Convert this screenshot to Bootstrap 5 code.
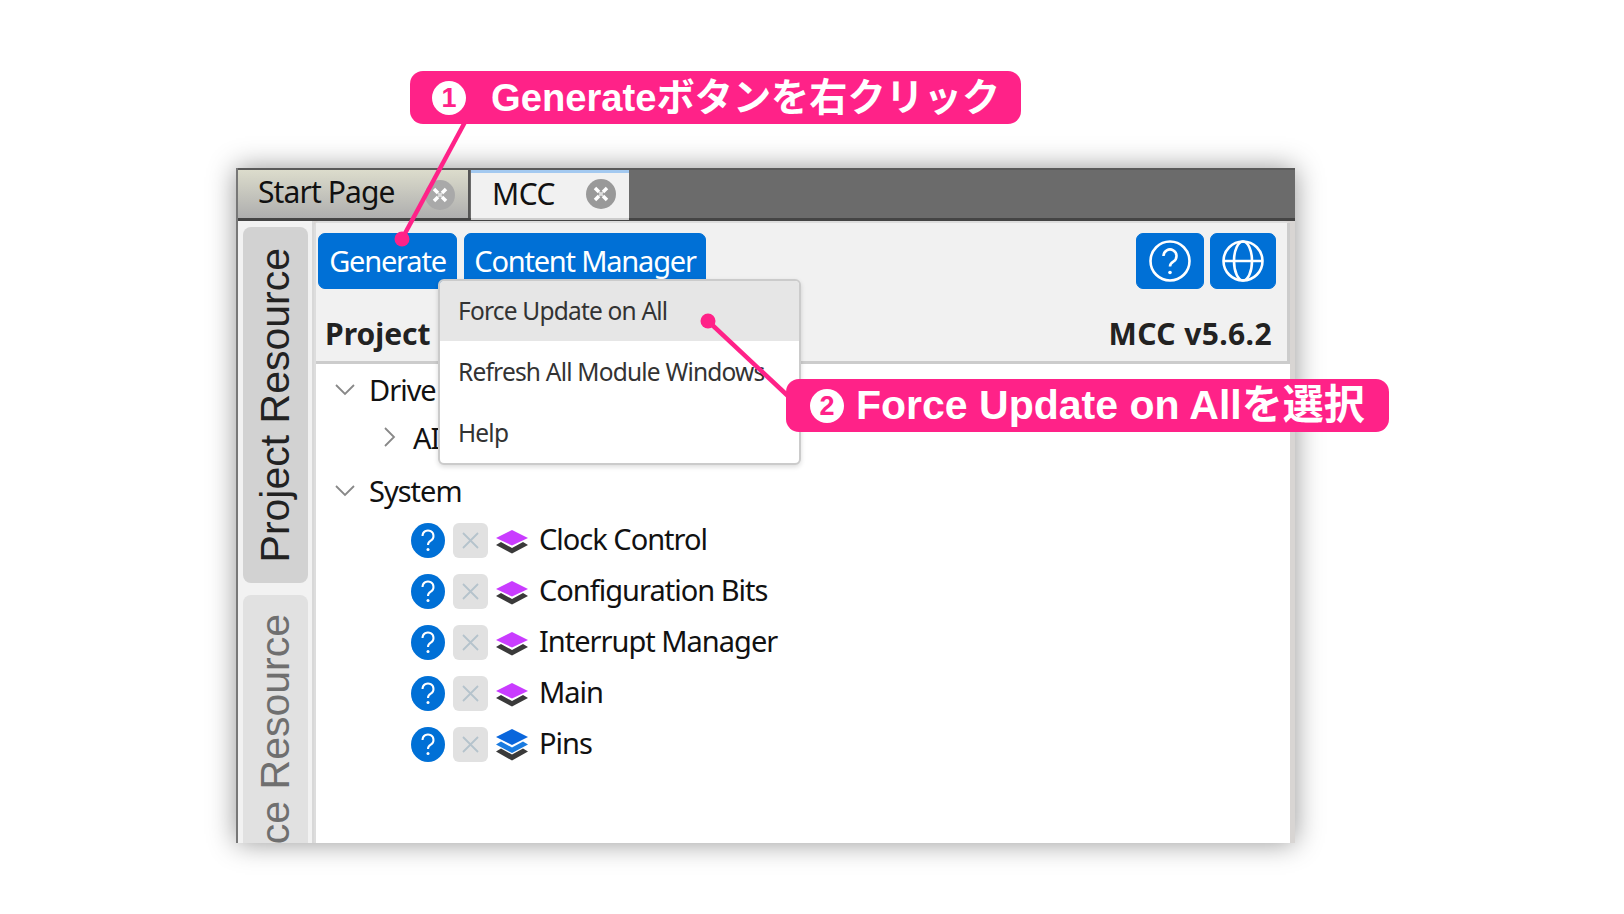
<!DOCTYPE html>
<html lang="ja">
<head>
<meta charset="utf-8">
<title>MCC</title>
<link href="https://cdn.jsdelivr.net/npm/bootstrap@5.3.0/dist/css/bootstrap.min.css" rel="stylesheet">
<style>
html,body{margin:0;height:914px;overflow:hidden;background:#fff}
.stage{position:relative;width:1624px;height:914px;padding:168px 329px 72px 236px;font-family:"Noto Sans","Noto Sans CJK JP",sans-serif;overflow:hidden}
.win{width:1059px;height:675px;background:#d8d5d3;box-shadow:0 0 26px rgba(0,0,0,.42);border-left:2px solid #777;overflow:hidden}
.tabbar{height:53px;background:#6b6b6b;border-top:2px solid #5a5a5a;border-bottom:3px solid #444}
.mtab{height:48px;color:#111;font-size:30px;letter-spacing:-.9px;line-height:44px;padding-left:20px;position:relative}
.tab-a{width:232px;background:linear-gradient(#dcdccc,#aeaeae);border-right:2px solid #555}
.tab-b{width:158px;background:#f1f1f1;border-top:3px solid #a3c9f0;padding-left:21px;height:50px;margin-left:1px;border-bottom:2px solid #ccc;line-height:41px;letter-spacing:-.5px}
.closer{position:absolute;width:30px;height:30px}
.tab-a .closer{right:13px;top:10px}
.tab-a .closer circle{fill:#a9a9a9}
.tab-b .closer{right:13px;top:6px}
.side{width:76px;background:#f2f2f2;padding:6px 5px 0 5px;border-right:2px solid #d8d8d8}
.vtab{width:65px;font-family:"Liberation Sans",Arial,sans-serif;font-size:41px;display:flex;justify-content:center;white-space:nowrap;overflow:hidden}
.vtab span{writing-mode:vertical-rl;transform:rotate(180deg);line-height:65px;flex:none}
.vt1{height:356px;background:#d2d2d2;color:#222;border-radius:8px;margin-bottom:12px;align-items:center}
.vt2{height:250px;background:#e1e1e1;color:#6f6f6f;border-radius:8px 8px 0 0;align-items:flex-start}
.vt2 span{margin-top:19px}
.panel{width:976px;background:#fff;position:relative;border-top:2px solid #ddd;border-left:2px solid #ddd;border-radius:6px 6px 0 0}
.phead{height:141px;background:#f1f1f1;border-bottom:3px solid #ccc;border-right:3px solid #ccc;padding:10px 11px 0 2px;position:relative}
.topbtns{gap:7px}
.bluebtn{--bs-btn-bg:#0070d6;--bs-btn-color:#fff;--bs-btn-border-color:#0070d6;--bs-btn-hover-bg:#0070d6;--bs-btn-hover-color:#fff;--bs-btn-border-radius:7px;--bs-btn-font-size:29px;--bs-btn-padding-x:0;--bs-btn-padding-y:0;height:56px;line-height:50px;font-weight:400;letter-spacing:-1.2px}
.bw1{width:139px}.bw2{width:242px}.bw3{width:68px}.bw4{width:66px;margin-left:-1px}
.bluebtn svg{display:block;margin:auto}
.ptitle{font-size:30px;font-weight:700;color:#222;line-height:38px;margin-top:26px;padding:0 4px 0 7px}
.ver{letter-spacing:.4px}
.popup{position:absolute;left:122px;top:56px;width:363px;height:186px;display:block;padding:0;margin:0;border:2px solid #cbcbcb;border-radius:6px;box-shadow:0 2px 5px rgba(0,0,0,.14);overflow:hidden;--bs-dropdown-font-size:24.5px;font-size:24.5px;letter-spacing:-.8px;min-width:0;z-index:3}
.popup .dropdown-item{color:#333;padding:0 0 0 18px;line-height:61px;height:61px}
.popup .dropdown-item.on{background:#e6e6e6;height:60px;line-height:60px}
.tree{padding-top:3px;color:#111;font-size:29px;letter-spacing:-1px}
.trow{height:44px;align-items:center;display:flex;line-height:1;gap:14px}
.lv0{padding-left:19px}
.lv1{padding-left:63px;margin-top:4px}
.sysrow{margin-top:9px}
.mods{margin-top:3px}
.chev{width:20px;height:20px;flex:none}
.mod{height:51px;padding-left:95px;display:flex;align-items:center;gap:8px}
.qdot{width:34px;height:35px;flex:none}
.xbox{width:35px;height:35px;background:#e1e1e1;border-radius:6px;flex:none;display:flex;align-items:center;justify-content:center}
.lay{width:32px;height:32px;flex:none}
.modname{margin-left:3px;position:relative;top:-2px}
.tag{position:absolute;background:#ff2288;color:#fff;font-family:"Liberation Sans","Noto Sans CJK JP",sans-serif;font-weight:700;border-radius:13px;height:53px;display:flex;align-items:center;white-space:nowrap;z-index:6}
.tag1{left:410px;top:71px;width:611px;padding-left:22px;font-size:38.200px}
.tag2{left:786px;top:379px;width:603px;padding-left:24px;font-size:41px}
.num{display:block;flex:none;width:34px;height:34px;border-radius:50%;background:#fff;color:#ff2288;font-size:27px;line-height:34px;text-align:center}
.t1gap{margin-left:25px}
.t2gap{margin-left:12px}
.lead-lines{position:absolute;left:0;top:0;width:1624px;height:914px;z-index:5;pointer-events:none}
</style>
</head>
<body>
<div class="stage">
  <div class="win d-flex flex-column">
    <div class="tabbar d-flex flex-shrink-0">
      <div class="mtab tab-a">Start Page
        <svg class="closer" viewBox="0 0 30 30"><circle cx="15" cy="15" r="15"/><path d="M9 9l4 4M21 9l-4 4M9 21l4-4M21 21l-4-4" stroke="#fff" stroke-width="3.500"/><path d="M13 13l4 4M17 13l-4 4" stroke="#ddd" stroke-width="2"/></svg>
      </div>
      <div class="mtab tab-b">MCC
        <svg class="closer" viewBox="0 0 30 30"><circle cx="15" cy="15" r="15" fill="#999"/><path d="M9 9l4 4M21 9l-4 4M9 21l4-4M21 21l-4-4" stroke="#fff" stroke-width="3.500"/><path d="M13 13l4 4M17 13l-4 4" stroke="#ddd" stroke-width="2"/></svg>
      </div>
    </div>
    <div class="d-flex flex-grow-1">
      <div class="side flex-shrink-0">
        <div class="vtab vt1"><span>Project Resource</span></div>
        <div class="vtab vt2"><span>Device Resource</span></div>
      </div>
      <div class="panel flex-shrink-0">
        <div class="phead">
          <div class="d-flex topbtns">
            <button class="btn bluebtn bw1">Generate</button>
            <button class="btn bluebtn bw2">Content Manager</button>
            <button class="btn bluebtn bw3 ms-auto"><svg width="44" height="44" viewBox="0 0 44 44" fill="none" stroke="#fff" stroke-width="2.600"><circle cx="22" cy="22" r="19.500"/><path d="M15.500 17a6.500 6.500 0 1 1 9.800 5.600c-2.200 1.300-3.300 2.400-3.300 5"/><circle cx="22" cy="33.500" r="1.800" fill="#fff" stroke="none"/></svg></button>
            <button class="btn bluebtn bw4"><svg width="44" height="44" viewBox="0 0 44 44" fill="none" stroke="#fff" stroke-width="2.600"><circle cx="22" cy="22" r="19.500"/><ellipse cx="22" cy="22" rx="9" ry="19.500"/><path d="M2.500 22h39"/></svg></button>
          </div>
          <div class="d-flex justify-content-between ptitle"><span>Project</span><span class="ver">MCC v5.6.2</span></div>
          <div class="dropdown-menu popup">
            <a class="dropdown-item on" href="#">Force Update on All</a>
            <a class="dropdown-item" href="#">Refresh All Module Windows</a>
            <a class="dropdown-item" href="#">Help</a>
          </div>
        </div>
        <div class="tree">
          <div class="trow lv0"><svg class="chev" viewBox="0 0 20 20" fill="none" stroke="#888" stroke-width="1.800"><path d="M1 6l9 9 9-9"/></svg><span>Drive</span></div>
          <div class="trow lv1"><svg class="chev" viewBox="0 0 20 20" fill="none" stroke="#888" stroke-width="1.800"><path d="M6 1l9 9-9 9"/></svg><span>AI</span></div>
          <div class="trow lv0 sysrow"><svg class="chev" viewBox="0 0 20 20" fill="none" stroke="#888" stroke-width="1.800"><path d="M1 6l9 9 9-9"/></svg><span>System</span></div>
          <div id="mods" class="mods"></div>
        </div>
      </div>
    </div>
  </div>
  <svg class="lead-lines" viewBox="0 0 1624 914"><path d="M465 122L402 239" stroke="#ff2288" stroke-width="4.500" fill="none"/><circle cx="402" cy="239" r="7.500" fill="#ff2288"/><path d="M708 321L788 396" stroke="#ff2288" stroke-width="4.500" fill="none"/><circle cx="708" cy="321" r="7.500" fill="#ff2288"/></svg>
  <div class="tag tag1"><span class="num">1</span><span class="t1gap">Generateボタンを右クリック</span></div>
  <div class="tag tag2"><span class="num">2</span><span class="t2gap">Force Update on Allを選択</span></div>
</div>
<script>
var names=[["Clock Control",0],["Configuration Bits",0],["Interrupt Manager",0],["Main",0],["Pins",1]];
var q='<svg class="qdot" viewBox="0 0 34 35"><ellipse cx="17" cy="17.500" rx="17" ry="17.500" fill="#0070d6"/><path d="M11.500 13a5.500 5.500 0 1 1 8.300 4.700c-1.900 1.100-2.800 2-2.800 4.300" fill="none" stroke="#fff" stroke-width="2"/><circle cx="17" cy="26.500" r="1.500" fill="#fff"/></svg>';
var x='<div class="xbox"><svg width="17" height="17" viewBox="0 0 17 17" fill="none" stroke="#b5c3cc" stroke-width="1.800"><path d="M1 1l15 15M16 1L1 16"/></svg></div>';
function layer(b){
 if(b) return '<svg class="lay" viewBox="0 0 32 32"><path d="M0 22.500l5-3 11 6 11-6 5 3-16 9z" fill="#3a3a3a"/><path d="M0 15.500l5-3 11 6 11-6 5 3-16 8.500z" fill="#1a7be0"/><path d="M16 0L32 8L16 16L0 8z" fill="#0a66dc"/></svg>';
 return '<svg class="lay" viewBox="0 0 32 32"><path d="M0 20l5-3 11 6 11-6 5 3-16 8.500z" fill="#3a3a3a"/><path d="M16 5L32 13L16 20.500L0 13z" fill="#c93cff"/></svg>';
}
document.getElementById('mods').innerHTML=names.map(function(n){return '<div class="mod">'+q+x+layer(n[1])+'<span class="modname">'+n[0]+'</span></div>'}).join('');
</script>
<script src="https://cdn.jsdelivr.net/npm/bootstrap@5.3.0/dist/js/bootstrap.bundle.min.js"></script>
</body>
</html>
